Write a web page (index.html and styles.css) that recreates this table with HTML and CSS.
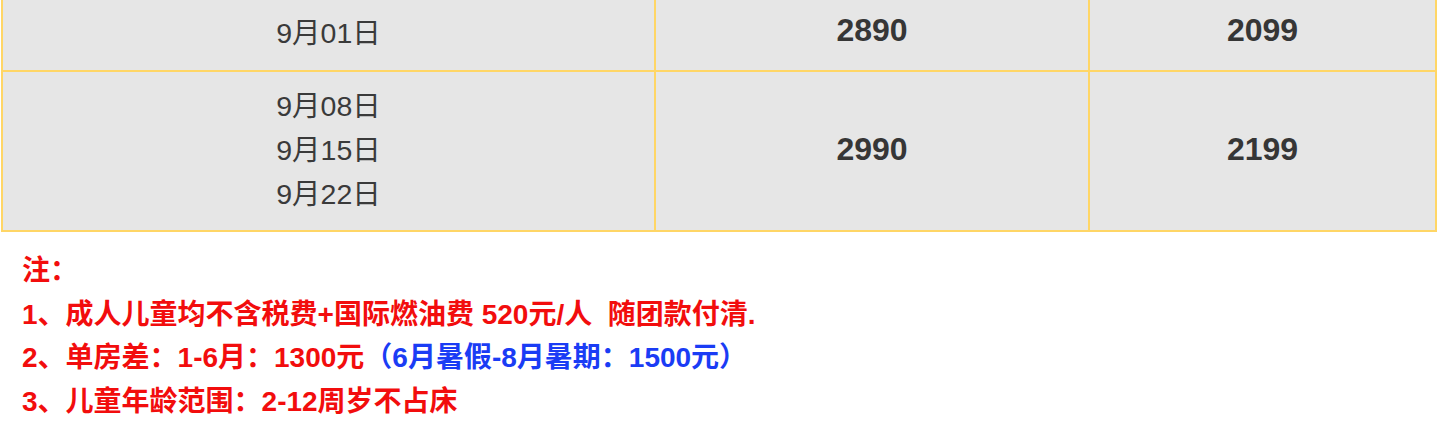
FILE: index.html
```html
<!DOCTYPE html>
<html lang="zh-CN">
<head>
<meta charset="utf-8">
<title>价格表</title>
<link rel="stylesheet" href="styles.css">
</head>
<body>
<div class="price-table">
  <div class="cell date">9月01日</div>
  <div class="cell price">2890</div>
  <div class="cell price">2099</div>
  <div class="cell date multi">
    <span>9月08日</span>
    <span>9月15日</span>
    <span>9月22日</span>
  </div>
  <div class="cell price">2990</div>
  <div class="cell price">2199</div>
</div>
<div class="notes">
  <p>注：</p>
  <p>1、成人儿童均不含税费+国际燃油费 520元/人&nbsp;&nbsp;随团款付清.</p>
  <p>2、单房差：1-6月：1300元<span class="blue">（6月暑假-8月暑期：1500元）</span></p>
  <p>3、儿童年龄范围：2-12周岁不占床</p>
</div>
</body>
</html>
```
FILE: styles.css
```css
html, body {
  margin: 0;
  padding: 0;
  background: #ffffff;
}
body {
  font-family: "Liberation Sans", Arial, "Noto Sans CJK SC", sans-serif;
  padding-left: 1px;
}
.price-table {
  display: grid;
  grid-template-columns: 651px 432px 345px;
  grid-template-rows: 76px 158px;
  gap: 2px;
  padding: 2px;
  width: 1432px;
  background: #ffd666;
  margin-top: -8px;
}
.cell {
  background: #e6e6e6;
  display: flex;
  align-items: center;
  justify-content: center;
  color: #3a3a3a;
  padding-bottom: 4px;
}
.date {
  font-size: 28.5px;
}
.date.multi {
  flex-direction: column;
  line-height: 44px;
  padding-bottom: 2px;
}
.price {
  font-size: 32px;
  font-weight: bold;
  color: #363636;
}
.notes {
  padding: 17px 0 0 21px;
  color: #f20d0d;
  font-weight: bold;
  font-size: 28px;
}
.notes p {
  margin: 0;
  line-height: 43.5px;
}
.blue {
  color: #1a3cf5;
}
```
